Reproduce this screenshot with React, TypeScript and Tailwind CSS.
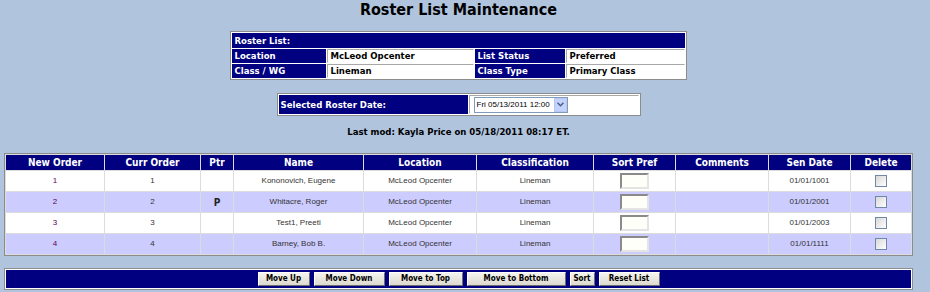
import React from "react";

const verdana =
  "font-['DejaVu_Sans_Condensed','DejaVu_Sans',sans-serif] font-stretch-condensed font-bold";
const arial = "font-['Liberation_Sans',Arial,sans-serif]";

interface RosterRow {
  newOrder: number;
  currOrder: number;
  ptr: string;
  name: string;
  location: string;
  classification: string;
  senDate: string;
}

const rows: RosterRow[] = [
  { newOrder: 1, currOrder: 1, ptr: "", name: "Kononovich, Eugene", location: "McLeod Opcenter", classification: "Lineman", senDate: "01/01/1001" },
  { newOrder: 2, currOrder: 2, ptr: "P", name: "Whitacre, Roger", location: "McLeod Opcenter", classification: "Lineman", senDate: "01/01/2001" },
  { newOrder: 3, currOrder: 3, ptr: "", name: "Test1, Preeti", location: "McLeod Opcenter", classification: "Lineman", senDate: "01/01/2003" },
  { newOrder: 4, currOrder: 4, ptr: "", name: "Barney, Bob B.", location: "McLeod Opcenter", classification: "Lineman", senDate: "01/01/1111" },
];

const headers = [
  "New Order",
  "Curr Order",
  "Ptr",
  "Name",
  "Location",
  "Classification",
  "Sort Pref",
  "Comments",
  "Sen Date",
  "Delete",
];

const buttons = [
  { label: "Move Up", w: "w-[52px]" },
  { label: "Move Down", w: "w-[71px]" },
  { label: "Move to Top", w: "w-[74px]" },
  { label: "Move to Bottom", w: "w-[99px]" },
  { label: "Sort", w: "w-[25px]" },
  { label: "Reset List", w: "w-[61px]" },
];

function Label({ children, className = "", colSpan }: { children?: React.ReactNode; className?: string; colSpan?: number }) {
  return (
    <td
      colSpan={colSpan}
      className={`bg-[#000080] text-white pl-[2px] p-0 text-[9.5px] leading-none ${verdana} ${className}`}
    >
      {children}
    </td>
  );
}

function Value({ children, className = "" }: { children?: React.ReactNode; className?: string }) {
  return (
    <td
      className={`bg-white text-black pl-[2px] p-0 text-[9.5px] leading-none border border-t-[#a8a8a8] border-l-[#a8a8a8] border-r-white border-b-white ${verdana} ${className}`}
    >
      {children}
    </td>
  );
}

function DateSelect() {
  return (
    <div className="ml-[2px] flex h-[16px] w-[94px] items-center border border-[#7f9db9] bg-white">
      <span className={`flex-1 pl-[2px] text-[8px] font-normal text-black ${arial}`}>
        Fri 05/13/2011 12:00
      </span>
      <span className="flex h-[14px] w-[13px] items-center justify-center border border-[#b8c8f0] bg-[#c3d3fd]">
        <svg width="7" height="5" viewBox="0 0 7 5">
          <path d="M0.5 0.8 L3.5 3.8 L6.5 0.8" fill="none" stroke="#4d6185" strokeWidth="1.5" />
        </svg>
      </span>
    </div>
  );
}

function App() {
  return (
    <div className="min-h-screen bg-[#b0c4de]">
      <div className="w-[917px] pt-[1px]">
        <h1 className={`text-center text-[16px] leading-[18px] text-black ${verdana}`}>
          Roster List Maintenance
        </h1>

        <table className="mx-auto mt-[12px] w-[456px] table-fixed border-separate border-spacing-[1px] border border-[#8c8c8c] bg-white">
          <colgroup>
            <col className="w-[94px]" />
            <col className="w-[147px]" />
            <col className="w-[90px]" />
            <col className="w-[118px]" />
          </colgroup>
          <tbody>
            <tr className="h-[15px]">
              <Label colSpan={4}>Roster List:</Label>
            </tr>
            <tr className="h-[14px]">
              <Label>Location</Label>
              <Value>McLeod Opcenter</Value>
              <Label>List Status</Label>
              <Value>Preferred</Value>
            </tr>
            <tr className="h-[14px]">
              <Label>Class / WG</Label>
              <Value>Lineman</Value>
              <Label>Class Type</Label>
              <Value>Primary Class</Value>
            </tr>
          </tbody>
        </table>

        <table className="mx-auto mt-[13px] w-[364px] table-fixed border-separate border-spacing-[1px] border border-[#8c8c8c] bg-white">
          <colgroup>
            <col className="w-[189px]" />
            <col className="w-[170px]" />
          </colgroup>
          <tbody>
            <tr className="h-[19px]">
              <Label>Selected Roster Date:</Label>
              <Value className="align-middle">
                <DateSelect />
              </Value>
            </tr>
          </tbody>
        </table>

        <p className={`mt-[10px] text-center text-[9.5px] leading-[12px] text-black ${verdana}`}>
          Last mod: Kayla Price on 05/18/2011 08:17 ET.
        </p>

        <table className="ml-[4px] mt-[15px] w-[909px] table-fixed border-separate border-spacing-[1px] border border-[#8c8c8c] bg-[#dcdcdc]">
          <colgroup>
            <col className="w-[98px]" />
            <col className="w-[95px]" />
            <col className="w-[32px]" />
            <col className="w-[129px]" />
            <col className="w-[112px]" />
            <col className="w-[116px]" />
            <col className="w-[81px]" />
            <col className="w-[92px]" />
            <col className="w-[81px]" />
            <col className="w-[60px]" />
          </colgroup>
          <thead>
            <tr className="h-[15px]">
              {headers.map((h) => (
                <th
                  key={h}
                  className={`bg-[#000080] p-0 text-center text-[10px] leading-none text-white ${verdana}`}
                >
                  {h}
                </th>
              ))}
            </tr>
          </thead>
          <tbody>
            {rows.map((r, i) => {
              const bg = i % 2 === 1 ? "bg-[#ccccff]" : "bg-white";
              const cell = `${bg} p-0 text-center align-middle text-[8px] text-[#333] ${arial}`;
              return (
                <tr key={r.newOrder} className="h-[20px]">
                  <td className={`${cell} !text-[#5c005c]`}>{r.newOrder}</td>
                  <td className={cell}>{r.currOrder}</td>
                  <td className={`${bg} p-0 text-center text-[10px] text-[#222] ${verdana}`}>{r.ptr}</td>
                  <td className={cell}>{r.name}</td>
                  <td className={cell}>{r.location}</td>
                  <td className={cell}>{r.classification}</td>
                  <td className={`${bg} p-0 align-middle`}>
                    <div className="mx-auto h-[16px] w-[29px] border-2 border-t-[#8a8a8a] border-l-[#8a8a8a] border-r-[#e4e4e4] border-b-[#e4e4e4] bg-[#fffffa]" />
                  </td>
                  <td className={cell}></td>
                  <td className={cell}>{r.senDate}</td>
                  <td className={`${bg} p-0 align-middle`}>
                    <div className="mx-auto h-[12px] w-[12px] border border-[#6f88a8] bg-gradient-to-br from-[#d8d8d8] to-white" />
                  </td>
                </tr>
              );
            })}
          </tbody>
        </table>

        <div className="ml-[4px] mt-[12px] w-[909px] border border-[#8c8c8c] bg-white p-[1px]">
          <div className="flex h-[18px] items-center justify-center gap-[4px] bg-[#000080]">
            {buttons.map((b) => (
              <button
                key={b.label}
                className={`${b.w} h-[14px] border border-t-white border-l-white border-r-[#6e6e6e] border-b-[#6e6e6e] bg-gradient-to-b from-[#f4f3ee] to-[#dcdad0] p-0 text-center text-[8px] leading-none text-black ${verdana}`}
              >
                {b.label}
              </button>
            ))}
          </div>
        </div>
      </div>
    </div>
  );
}

export default App;
